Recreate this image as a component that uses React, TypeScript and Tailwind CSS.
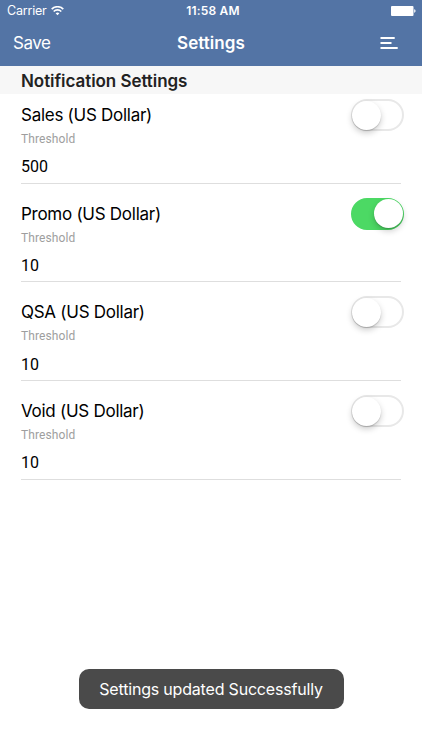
import clsx from "clsx";

type Setting = { label: string; threshold: string; enabled: boolean };

const settings: Setting[] = [
  { label: "Sales (US Dollar)", threshold: "500", enabled: false },
  { label: "Promo (US Dollar)", threshold: "10", enabled: true },
  { label: "QSA (US Dollar)", threshold: "10", enabled: false },
  { label: "Void (US Dollar)", threshold: "10", enabled: false },
];

function StatusBar() {
  return (
    <div className="grid h-[22px] grid-cols-[1fr_auto_1fr] items-center pl-[7px] pr-[6px]">
      <div className="flex items-center gap-1">
        <span className="text-[12.5px] leading-none tracking-[-0.2px]">Carrier</span>
        <svg width="13" height="10" viewBox="0 0 13 10" fill="none" stroke="white" strokeWidth="1.6" aria-hidden>
          <path d="M0.7 3.1a8.2 8.2 0 0 1 11.6 0" />
          <path d="M2.7 5.5a5.3 5.3 0 0 1 7.6 0" />
          <path d="M6.5 9.2 4.6 7.3a2.8 2.8 0 0 1 3.8 0Z" fill="white" stroke="none" />
        </svg>
      </div>
      <span className="pl-[3px] text-center text-[12px] font-semibold leading-none tracking-[0.2px]">11:58 AM</span>
      <svg className="justify-self-end" width="25" height="10" viewBox="0 0 25 10" fill="white" aria-hidden>
        <rect width="22.5" height="10" rx="1" />
        <path d="M23.2 3.3c1.8.3 1.8 3.1 0 3.4Z" />
      </svg>
    </div>
  );
}

function Toggle({ enabled }: { enabled: boolean }) {
  return (
    <button
      type="button"
      role="switch"
      aria-checked={enabled}
      className={clsx(
        "flex h-8 w-[53px] items-center rounded-full border-2",
        enabled ? "justify-end border-[#4cd964] bg-[#4cd964]" : "justify-start border-[#e8e8e8] bg-white",
      )}
    >
      <span className="-mx-px h-[29px] w-[29px] shrink-0 rounded-full bg-white shadow-[0_3px_6px_rgba(0,0,0,0.2),0_1px_1px_rgba(0,0,0,0.16)]" />
    </button>
  );
}

function SettingRow({ label, threshold, enabled }: Setting) {
  return (
    <div className="h-[98.7px] pl-[21px] pr-[18px] pt-[5px]">
      <div className="flex h-8 items-center justify-between">
        <span className="pt-[1.2px] text-[17px] leading-none tracking-[-0.27px]">{label}</span>
        <Toggle enabled={enabled} />
      </div>
      <div className="mr-[3px] h-[52.5px] border-b border-[#dedede] pt-[1.9px] font-['Roboto',sans-serif]">
        <p className="text-[12px] leading-[13px] tracking-[0.1px] text-[#9e9e9e]">Threshold</p>
        <p className="mt-[11.5px] text-[16px] leading-5">{threshold}</p>
      </div>
    </div>
  );
}

export default function App() {
  return (
    <div className="flex h-[750px] w-[422px] flex-col overflow-hidden bg-white font-['Inter',sans-serif] text-black">
      <header className="h-[66px] bg-[#5374a5] text-white">
        <StatusBar />
        <nav className="grid h-[43px] grid-cols-[1fr_auto_1fr] items-center px-[13px]">
          <button type="button" className="pt-px text-left text-[17px] tracking-[-0.5px]">Save</button>
          <h1 className="pt-px text-center text-[17px] font-semibold tracking-[0.05px]">Settings</h1>
          <svg className="mr-[11px] justify-self-end" width="18" height="14" viewBox="0 0 18 14" stroke="white" strokeWidth="2" aria-hidden>
            <path d="M.5 1h14.2M.5 6h11M.5 11h17.2" />
          </svg>
        </nav>
      </header>
      <h2 className="flex h-7 items-center bg-[#f7f7f7] pl-[21px] pt-[3px] text-[17px] font-semibold tracking-[-0.06px] text-[#222]">
        Notification Settings
      </h2>
      <main className="flex-1">
        {settings.map((setting) => (
          <SettingRow key={setting.label} {...setting} />
        ))}
      </main>
      <div role="status" className="mb-[41px] flex h-[40.5px] w-[265px] items-center justify-center self-center rounded-[10px] bg-[#4a4a4a] text-[16px] tracking-[-0.19px] text-white">
        Settings updated Successfully
      </div>
    </div>
  );
}
